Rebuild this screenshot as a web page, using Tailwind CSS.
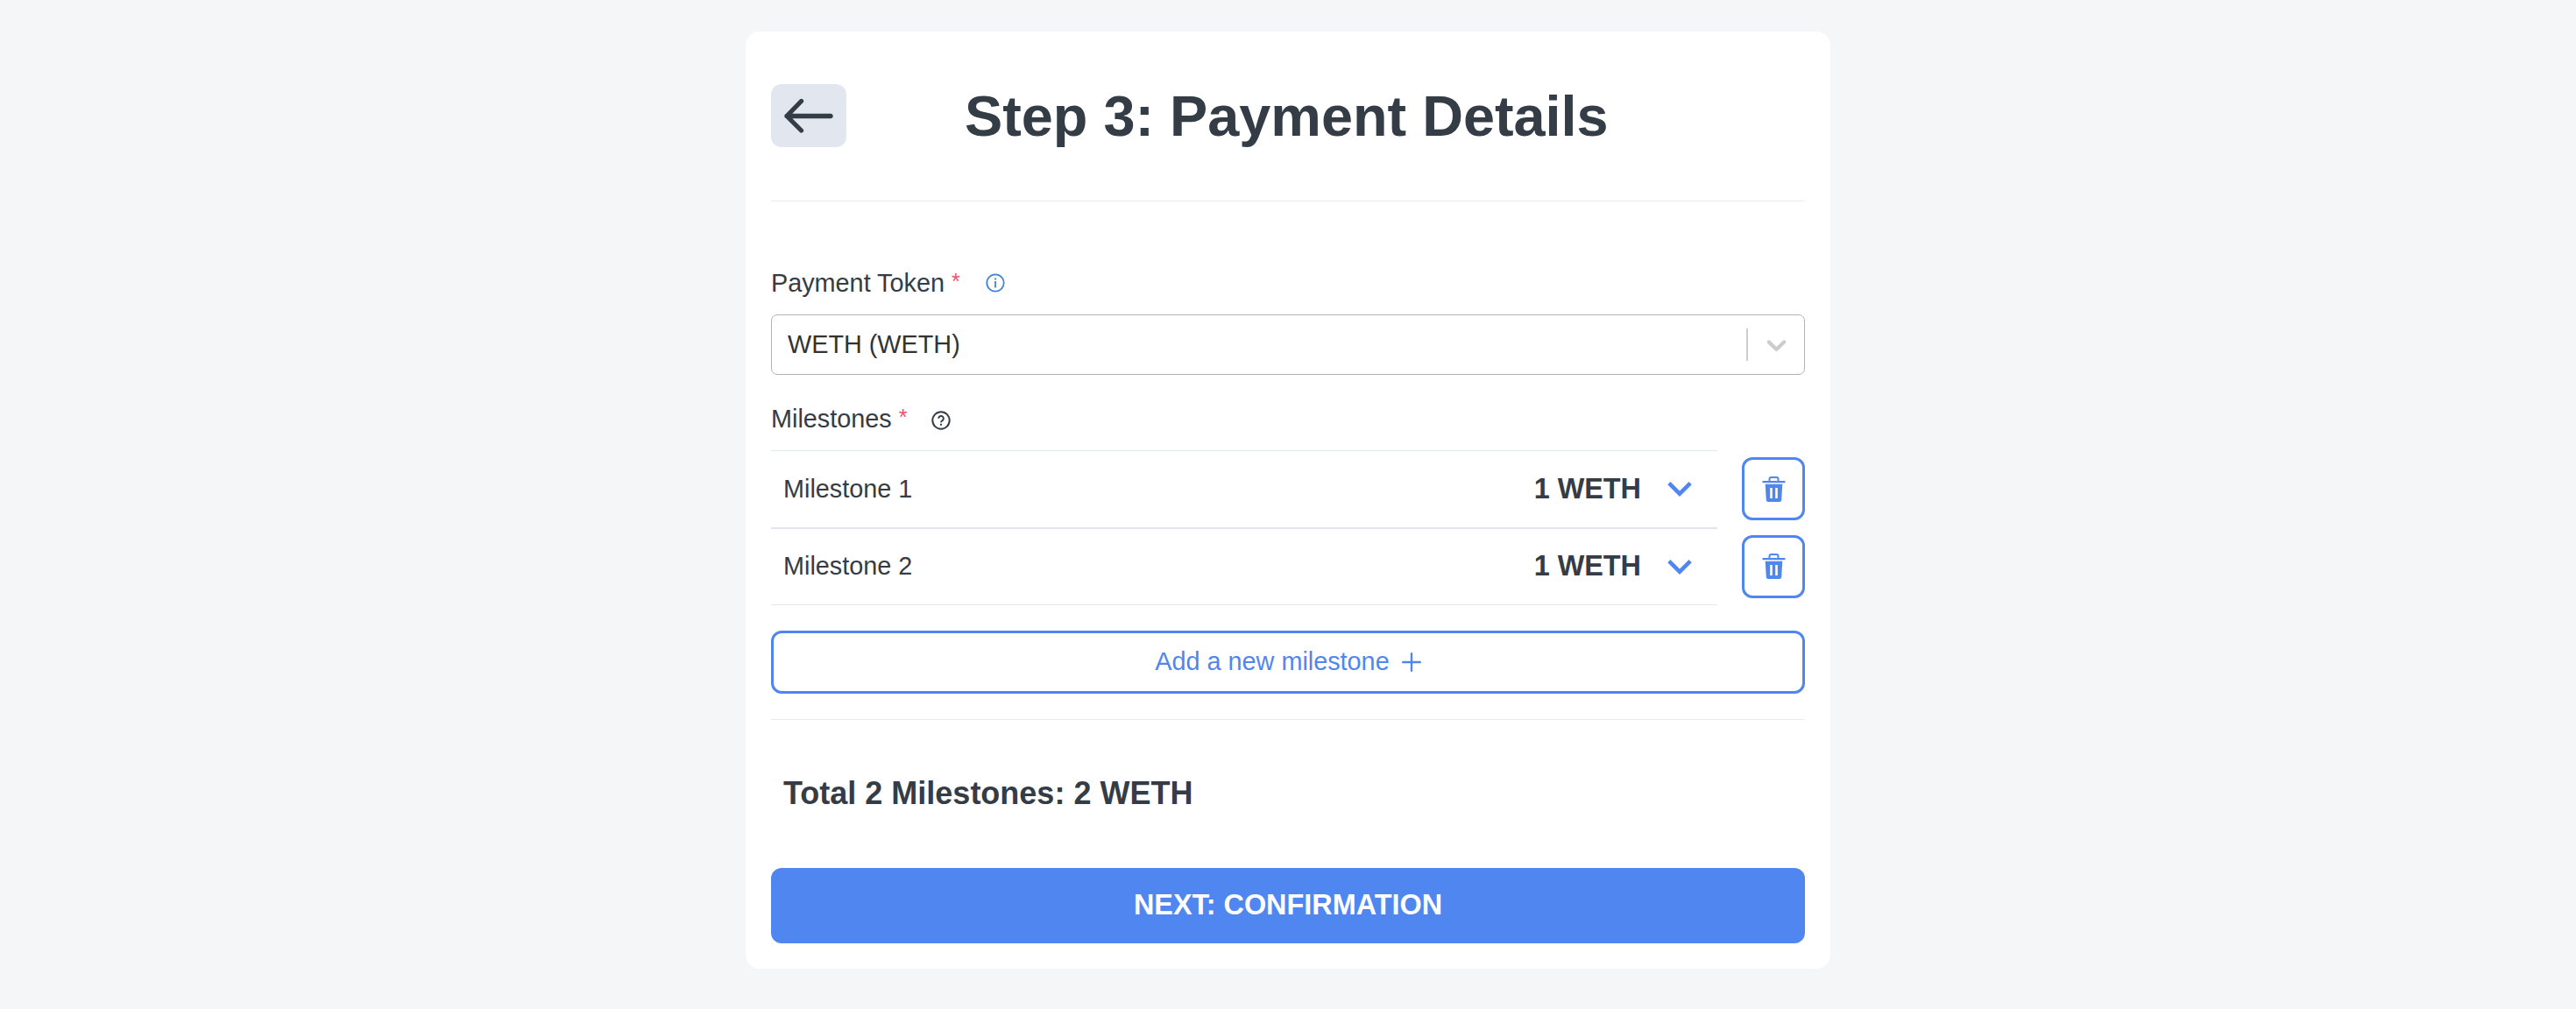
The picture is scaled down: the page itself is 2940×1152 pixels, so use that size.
<!DOCTYPE html>
<html lang="en">
<head>
<meta charset="utf-8">
<title>Payment Details</title>
<script src="https://cdn.jsdelivr.net/npm/@tailwindcss/browser@4"></script>
</head>
<body class="bg-[#f4f6f8] text-[#343c46] font-['Liberation_Sans',Arial,sans-serif] text-[28.8px] leading-[44px]">
<main class="mx-auto mt-9 flex h-[1070px] w-[1238px] flex-col rounded-2xl bg-white px-[29px]">
  <header class="mt-[60px] flex h-[72px] items-center">
    <button class="flex h-[72px] w-[86px] items-center justify-center rounded-xl bg-[#e2e7ef]" aria-label="Back">
      <svg class="h-[40px] w-[56px]" viewBox="0 0 56 40" fill="none" stroke="currentColor" stroke-width="5.3" stroke-linecap="round" stroke-linejoin="round"><path d="M19.500 3.500L3 20.500L19.500 37M3 20.500H53"/></svg>
    </button>
    <h1 class="ml-[135px] pt-[2px] text-[64.8px] leading-[72px] font-bold whitespace-nowrap">Step 3: Payment Details</h1>
  </header>
  <hr class="mt-[61px] border-t border-[#ececed]">
  <div class="mt-[71px] flex h-[44px] items-center">
    <label>Payment Token</label>
    <span class="ml-2 pb-1 text-[25px] text-[#ef5170]">*</span>
    <svg class="ml-[29px] h-[22px] w-[22px] text-[#4285d8]" viewBox="0 0 22 22" fill="none" stroke="currentColor" stroke-width="1.8"><circle cx="11" cy="11" r="9.7"/><path d="M11 9V16.500M11 5.600V7.400"/></svg>
  </div>
  <div class="mt-[14px] flex h-[69px] items-center rounded-[7px] border border-[#b3b3b3] pl-[18px] text-[#333333]">
    <span class="grow pb-[2px]">WETH (WETH)</span>
    <span class="h-[37px] w-[2px] bg-[#cccccc]"></span>
    <svg class="mr-[13.5px] ml-[13.5px] h-[37px] w-[37px] text-[#cccccc]" viewBox="0 0 20 20" fill="currentColor"><path d="M4.516 7.548c0.436-0.446 1.043-0.481 1.576 0l3.908 3.747 3.908-3.747c0.533-0.481 1.141-0.446 1.574 0 0.436 0.445 0.408 1.197 0 1.615-0.406 0.418-4.695 4.502-4.695 4.502-0.217 0.223-0.502 0.335-0.787 0.335s-0.57-0.112-0.789-0.335c0 0-4.287-4.084-4.695-4.502s-0.436-1.17 0-1.615z"/></svg>
  </div>
  <div class="mt-[28px] flex h-[44px] items-center">
    <label>Milestones</label>
    <span class="ml-2 pb-1 text-[25px] text-[#ef5170]">*</span>
    <svg class="mt-[3px] ml-[28px] h-[22px] w-[22px]" viewBox="0 0 22 22" fill="none" stroke="currentColor" stroke-width="2"><circle cx="11" cy="11" r="9.7"/><path d="M8.200 8.800a2.800 2.800 0 1 1 4.600 2.100C11.600 11.800 11 12.200 11 13.300M11 14.800V16.800"/></svg>
  </div>
  <div class="mt-[14px] flex h-[177px] gap-7">
    <div class="flex w-[1080px] flex-col">
      <div class="flex h-[89px] items-center border-t border-b border-[#e0e6eb] pr-[29px] pl-[14px]">
        <span class="grow pb-[2px]">Milestone 1</span>
        <span class="pb-[2px] text-[32.4px] font-bold">1 WETH</span>
        <svg class="ml-[30px] h-[17px] w-7 text-[#5086f0]" viewBox="6 8.59 12 7.41" fill="currentColor"><path d="M16.59 8.59L12 13.17 7.41 8.59 6 10l6 6 6-6z"/></svg>
      </div>
      <div class="flex h-[88px] items-center border-t border-b border-[#e0e6eb] pr-[29px] pl-[14px]">
        <span class="grow pb-[2px]">Milestone 2</span>
        <span class="pb-[2px] text-[32.4px] font-bold">1 WETH</span>
        <svg class="ml-[30px] h-[17px] w-7 text-[#5086f0]" viewBox="6 8.59 12 7.41" fill="currentColor"><path d="M16.59 8.59L12 13.17 7.41 8.59 6 10l6 6 6-6z"/></svg>
      </div>
    </div>
    <div class="flex flex-col gap-[17px] pt-2 text-[#5086f0]">
      <button class="flex h-[72px] w-[72px] items-center justify-center rounded-xl border-3 border-[#5086f0]" aria-label="Remove milestone 1">
        <svg class="h-[29px] w-[27px]" viewBox="0 0 27 29" fill="currentColor"><path fill-rule="evenodd" d="M7.500 5V3Q7.500 0 10.500 0H16.500Q19.500 0 19.500 3V5H26.500V7.200H0.500V5ZM9.500 5H17.500V3Q17.500 2 16.500 2H10.500Q9.500 2 9.500 3Z"/><path fill-rule="evenodd" d="M3.700 8.700H23.300L22.200 27Q22 29 20 29H7Q5 29 4.800 27ZM9.200 13V25H11.800V13ZM15.200 13V25H17.800V13Z"/></svg>
      </button>
      <button class="flex h-[72px] w-[72px] items-center justify-center rounded-xl border-3 border-[#5086f0] pb-px" aria-label="Remove milestone 2">
        <svg class="h-[29px] w-[27px]" viewBox="0 0 27 29" fill="currentColor"><path fill-rule="evenodd" d="M7.500 5V3Q7.500 0 10.500 0H16.500Q19.500 0 19.500 3V5H26.500V7.200H0.500V5ZM9.500 5H17.500V3Q17.500 2 16.500 2H10.500Q9.500 2 9.500 3Z"/><path fill-rule="evenodd" d="M3.700 8.700H23.300L22.200 27Q22 29 20 29H7Q5 29 4.800 27ZM9.200 13V25H11.800V13ZM15.200 13V25H17.800V13Z"/></svg>
      </button>
    </div>
  </div>
  <button class="mt-[29px] flex h-[72px] items-center justify-center gap-[14px] rounded-xl border-3 border-[#5086f0] text-[#5086f0]">
    <span class="pb-[3px]">Add a new milestone</span>
    <svg class="h-[22px] w-[22px]" viewBox="0 0 22 22" fill="none" stroke="currentColor" stroke-width="2.4" stroke-linecap="round"><path d="M11 1.200V20.800M1.200 11H20.800"/></svg>
  </button>
  <hr class="mt-[29px] border-t border-[#ececed]">
  <p class="mt-[62px] ml-[14px] text-[36px] font-bold">Total 2 Milestones: 2 WETH</p>
  <button class="mt-[63px] flex h-[86px] items-center justify-center rounded-xl bg-[#5086f0] pb-[2px] text-[32.4px] font-bold text-white">NEXT: CONFIRMATION</button>
</main>
</body>
</html>
